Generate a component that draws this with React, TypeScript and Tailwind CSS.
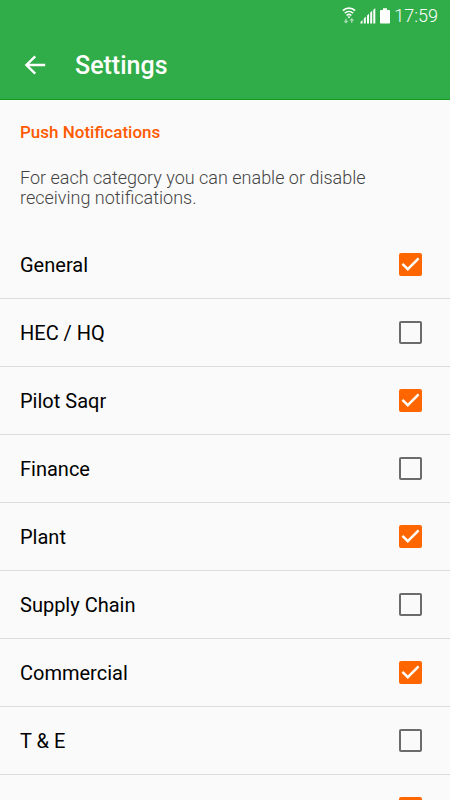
import { useId, useState } from 'react';

interface Category {
  id: string;
  name?: string;
  enabled: boolean;
}

const initialCategories: Category[] = [
  { id: 'general', name: 'General', enabled: true },
  { id: 'hec-hq', name: 'HEC / HQ', enabled: false },
  { id: 'pilot-saqr', name: 'Pilot Saqr', enabled: true },
  { id: 'finance', name: 'Finance', enabled: false },
  { id: 'plant', name: 'Plant', enabled: true },
  { id: 'supply-chain', name: 'Supply Chain', enabled: false },
  { id: 'commercial', name: 'Commercial', enabled: true },
  { id: 't-e', name: 'T & E', enabled: false },
  { id: 'uncategorized', enabled: true },
];

function WifiIcon() {
  return (
    <svg width="14" height="18" viewBox="0 0 14 18" fill="none" stroke="white" aria-hidden="true">
      <path d="M0.9 3.6C4.2 0.4 9.8 0.4 13.1 3.6" strokeWidth="1.7" />
      <path d="M2.8 6.1C5.2 3.9 8.8 3.9 11.2 6.1" strokeWidth="1.6" />
      <path d="M4.6 8.5C6 7.2 8 7.2 9.4 8.5" strokeWidth="1.5" />
      <path d="M5.4 9.4h3.2L7 11.4z" fill="white" stroke="none" />
      <path d="M4 11.6v4M2.4 13.9L4 15.7l1.6-1.8M9.8 16v-4M8.2 13.7l1.6-1.8 1.6 1.8" strokeWidth="1.2" opacity="0.6" />
    </svg>
  );
}

function SignalIcon() {
  return (
    <svg width="16" height="16" viewBox="0 0 16 16" fill="white" aria-hidden="true">
      <path d="M0.5 15.5v-1.6l2-1.8v3.4zM3.8 15.5v-5l2-1.9v6.9zM7 15.5V7.6l2-1.9v9.8zM10.2 15.5V4.6l2-1.9v12.8zM13.3 15.5V1.7l2-1.5v15.3z" />
    </svg>
  );
}

function BatteryIcon() {
  return (
    <svg width="10" height="16" viewBox="0 0 10 16" fill="white" aria-hidden="true">
      <path d="M3 0.3h4v1.6h2.2q.8 0 .8.8v12q0 .8-.8.8H.8q-.8 0-.8-.8v-12q0-.8.8-.8H3z" />
    </svg>
  );
}

function StatusBar() {
  return (
    <div className="flex h-8 items-center justify-end pr-3 text-white">
      <WifiIcon />
      <div className="ml-1 flex items-center gap-1">
        <SignalIcon />
        <BatteryIcon />
        <span className="text-lg leading-5 font-light">17:59</span>
      </div>
    </div>
  );
}

function CategoryRow({ category, onToggle }: { category: Category; onToggle: (id: string) => void }) {
  const inputId = useId();

  return (
    <li className="flex h-17 items-center justify-between border-b border-[#dcdcdc] pr-7 pl-5">
      <label htmlFor={inputId} className="flex-1 cursor-pointer text-xl text-black">
        {category.name}
      </label>
      <div className="grid">
        <input
          id={inputId}
          type="checkbox"
          aria-label={category.name ?? 'Uncategorized'}
          checked={category.enabled}
          onChange={() => onToggle(category.id)}
          className="peer col-start-1 row-start-1 size-[23px] cursor-pointer appearance-none rounded-[2px] border-2 border-[#6b6b6b] bg-transparent checked:border-[#ff6600] checked:bg-[#ff6600]"
        />
        <svg
          viewBox="0 0 23 23"
          fill="none"
          stroke="white"
          strokeWidth="2.5"
          aria-hidden="true"
          className="pointer-events-none invisible col-start-1 row-start-1 size-[23px] peer-checked:visible"
        >
          <path d="M3.4 10.8l5.4 5.4L19.6 5.4" />
        </svg>
      </div>
    </li>
  );
}

export default function App() {
  const [categories, setCategories] = useState(initialCategories);

  const toggleCategory = (id: string) => {
    setCategories(prev => prev.map(c => c.id === id ? { ...c, enabled: !c.enabled } : c));
  };

  return (
    <div className="flex h-screen flex-col overflow-hidden bg-[#fafafa] font-['Roboto',sans-serif]">
      <header className="h-25 shrink-0 border-b border-[#169c1e] bg-[#30ac49]">
        <StatusBar />
        <div className="flex h-17 items-center gap-7 pl-6 text-white">
          <button type="button" aria-label="Back" className="cursor-pointer">
            <svg width="23" height="22" viewBox="0 0 23 22" fill="none" stroke="white" strokeWidth="2.4" aria-hidden="true">
              <path d="M11.2 1.3L2.4 10l8.8 8.7M2.6 10h18.6" />
            </svg>
          </button>
          <h1 className="text-[25px] font-medium">Settings</h1>
        </div>
      </header>

      <main className="min-h-0 flex-1 overflow-y-auto [scrollbar-width:none]">
        <section className="px-5 pt-5 pb-[23px]">
          <h2 className="text-[17px] leading-6 font-medium text-[#ff5a00]">Push Notifications</h2>
          <p className="mt-6 text-lg leading-5 font-light text-[#444444]">
            For each category you can enable or disable receiving notifications.
          </p>
        </section>

        <ul>
          {categories.map(category => (
            <CategoryRow key={category.id} category={category} onToggle={toggleCategory} />
          ))}
        </ul>
      </main>
    </div>
  );
}
